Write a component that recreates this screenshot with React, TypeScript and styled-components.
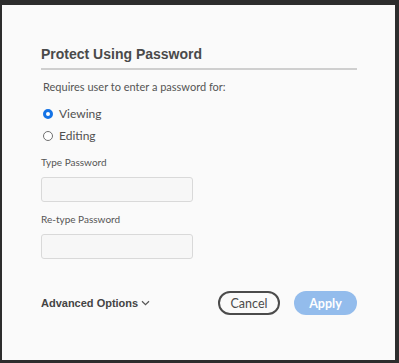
import styled, { createGlobalStyle } from "styled-components";

const GlobalStyle = createGlobalStyle`
  html, body {
    margin: 0;
    padding: 0;
    background: #2d2d2d;
  }
  body {
    font-family: Lato, "Open Sans", sans-serif;
  }
`;

const Backdrop = styled.div`
  width: 399px;
  height: 363px;
  box-sizing: border-box;
  padding: 5px 4px 3px 2px;
  background: #2d2d2d;
`;

const Dialog = styled.div`
  height: 100%;
  box-sizing: border-box;
  background: #fafafa;
  padding: 41px 38px 0 39px;
  display: flex;
  flex-direction: column;
`;

const Title = styled.h1`
  margin: 0;
  font-family: "Liberation Sans", Arial, sans-serif;
  font-size: 14px;
  font-weight: 700;
  color: #4a4a4a;
  padding-bottom: 5px;
  border-bottom: 2px solid #cfcfcf;
  line-height: 17px;
`;

const Intro = styled.p`
  margin: 9px 0 0 2px;
  font-size: 11px;
  color: #555;
  line-height: 16px;
`;

const RadioGroup = styled.div`
  margin: 11px 0 0 2px;
  display: flex;
  flex-direction: column;
  gap: 6px;
`;

const RadioRow = styled.label`
  display: flex;
  align-items: center;
  gap: 6px;
  font-size: 12px;
  color: #505050;
  line-height: 16px;
`;

const RadioDot = styled.span<{ $checked?: boolean }>`
  width: 10px;
  height: 10px;
  box-sizing: border-box;
  border-radius: 50%;
  border: ${({ $checked }) => ($checked ? "3px solid #1473e6" : "1.5px solid #707070")};
  background: #fff;
`;

const FieldLabel = styled.div<{ $top: number }>`
  margin-top: ${({ $top }) => $top}px;
  font-size: 10px;
  color: #555;
  line-height: 13px;
`;

const TextBox = styled.input<{ $top: number }>`
  margin-top: ${({ $top }) => $top}px;
  width: 152px;
  height: 25px;
  box-sizing: border-box;
  border: 1px solid #d9d9d9;
  border-radius: 3px;
  background: #f7f7f7;
  outline: none;
  padding: 0 6px;
`;

const Footer = styled.div`
  margin-top: 32px;
  display: flex;
  align-items: center;
`;

const Advanced = styled.button`
  border: none;
  background: none;
  padding: 0;
  display: flex;
  align-items: center;
  gap: 3px;
  font-family: "Liberation Sans", Arial, sans-serif;
  font-size: 11px;
  font-weight: 700;
  color: #444;
`;

const Actions = styled.div`
  margin-left: auto;
  display: flex;
  gap: 14px;
`;

const Pill = styled.button<{ $primary?: boolean }>`
  height: 24px;
  width: ${({ $primary }) => ($primary ? 63 : 62)}px;
  box-sizing: border-box;
  border-radius: 12px;
  font-family: Lato, "Open Sans", sans-serif;
  font-size: 12.5px;
  font-weight: ${({ $primary }) => ($primary ? 700 : 400)};
  padding: 0;
  border: ${({ $primary }) => ($primary ? "none" : "2px solid #4b4b4b")};
  background: ${({ $primary }) => ($primary ? "#93bcec" : "#fafafa")};
  color: ${({ $primary }) => ($primary ? "#ffffff" : "#4b4b4b")};
`;

export default function App() {
  return (
    <>
      <GlobalStyle />
      <Backdrop>
        <Dialog>
          <Title>Protect Using Password</Title>
          <Intro>Requires user to enter a password for:</Intro>
          <RadioGroup>
            <RadioRow>
              <RadioDot $checked />
              Viewing
            </RadioRow>
            <RadioRow>
              <RadioDot />
              Editing
            </RadioRow>
          </RadioGroup>
          <FieldLabel $top={12}>Type Password</FieldLabel>
          <TextBox type="password" $top={8} />
          <FieldLabel $top={11}>Re-type Password</FieldLabel>
          <TextBox type="password" $top={8} />
          <Footer>
            <Advanced>
              Advanced Options
              <svg width="9" height="6" viewBox="0 0 9 6">
                <path d="M1 1.2 L4.5 4.6 L8 1.2" fill="none" stroke="#555" strokeWidth="1.2" />
              </svg>
            </Advanced>
            <Actions>
              <Pill>Cancel</Pill>
              <Pill $primary>Apply</Pill>
            </Actions>
          </Footer>
        </Dialog>
      </Backdrop>
    </>
  );
}
